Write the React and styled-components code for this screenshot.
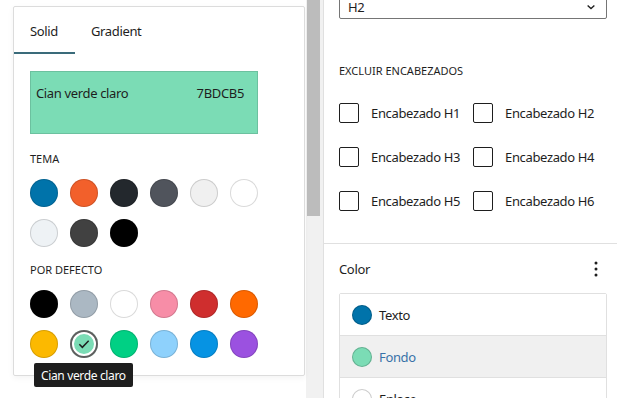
import React from "react";
import styled, { createGlobalStyle } from "styled-components";

const GlobalStyle = createGlobalStyle`
  body {
    margin: 0;
    font-family: "Noto Sans", "Open Sans", sans-serif;
    letter-spacing: -0.35px;
    color: #1e1e1e;
    background: #fff;
  }
`;

const themeColors = [
  "#0073aa",
  "#f2602b",
  "#23282d",
  "#50545c",
  "#f0f0f0",
  "#ffffff",
  "#eef2f5",
  "#414141",
  "#000000",
];

const defaultColors = [
  { hex: "#000000" },
  { hex: "#abb8c3" },
  { hex: "#ffffff" },
  { hex: "#f78da7" },
  { hex: "#cf2e2e" },
  { hex: "#ff6900" },
  { hex: "#fcb900" },
  { hex: "#7bdcb5", selected: true },
  { hex: "#00d084" },
  { hex: "#8ed1fc" },
  { hex: "#0693e3" },
  { hex: "#9b51e0" },
];

const headings = ["H1", "H2", "H3", "H4", "H5", "H6"];

const colorItems = [
  { label: "Texto", hex: "#0073aa" },
  { label: "Fondo", hex: "#7bdcb5", active: true },
  { label: "Enlace", hex: "#ffffff" },
];

const App = () => {
  return (
    <>
      <GlobalStyle />
      <Screen>
        <EditorArea>
          <Popover>
            <Tabs>
              <Tab active>Solid</Tab>
              <Tab>Gradient</Tab>
            </Tabs>
            <PopoverBody>
              <ColorDisplay>
                <span>Cian verde claro</span>
                <span>7BDCB5</span>
              </ColorDisplay>
              <GroupLabel>Tema</GroupLabel>
              <SwatchGrid>
                {themeColors.map((c, i) => (
                  <Swatch key={i} color={c} />
                ))}
              </SwatchGrid>
              <GroupLabel second>Por defecto</GroupLabel>
              <SwatchGrid>
                {defaultColors.map((c, i) => (
                  <Swatch key={i} color={c.hex} selected={c.selected}>
                    {c.selected && (
                      <svg width="16" height="16" viewBox="0 0 24 24">
                        <path
                          d="M5 12.5l4.5 4.5L19 7"
                          fill="none"
                          stroke="#1e1e1e"
                          strokeWidth="2.2"
                        />
                      </svg>
                    )}
                  </Swatch>
                ))}
              </SwatchGrid>
            </PopoverBody>
            <Tooltip>Cian verde claro</Tooltip>
          </Popover>
        </EditorArea>

        <Scrollbar>
          <Thumb />
        </Scrollbar>

        <Sidebar>
          <SettingsPanel>
            <Select>
              <span>H2</span>
              <svg width="18" height="18" viewBox="0 0 24 24">
                <path
                  d="M7.5 10l4.5 4 4.5-4"
                  fill="none"
                  stroke="#1e1e1e"
                  strokeWidth="1.8"
                />
              </svg>
            </Select>
            <SectionLabel>Excluir encabezados</SectionLabel>
            <CheckGrid>
              {headings.map((h) => (
                <CheckRow key={h}>
                  <CheckBox />
                  <span>Encabezado {h}</span>
                </CheckRow>
              ))}
            </CheckGrid>
          </SettingsPanel>

          <ColorPanel>
            <ColorHeader>
              <span>Color</span>
              <svg width="24" height="24" viewBox="0 0 24 24">
                <circle cx="12" cy="6" r="1.5" fill="#1e1e1e" />
                <circle cx="12" cy="12" r="1.5" fill="#1e1e1e" />
                <circle cx="12" cy="18" r="1.5" fill="#1e1e1e" />
              </svg>
            </ColorHeader>
            <ColorList>
              {colorItems.map((item) => (
                <ColorItem key={item.label} active={item.active}>
                  <Indicator color={item.hex} />
                  <span>{item.label}</span>
                </ColorItem>
              ))}
            </ColorList>
          </ColorPanel>
        </Sidebar>
      </Screen>
    </>
  );
};

const Screen = styled.div`
  display: flex;
  width: 617px;
  height: 398px;
  overflow: hidden;
  background: #fff;
`;

const EditorArea = styled.div`
  width: 306px;
  flex-shrink: 0;
  padding: 6px 0 0 13px;
  box-sizing: border-box;
`;

const Popover = styled.div`
  position: relative;
  width: 292px;
  height: 370px;
  box-sizing: border-box;
  border: 1px solid #dcdcdc;
  border-radius: 2px;
  background: #fff;
  box-shadow: 0 2px 6px rgba(0, 0, 0, 0.05);
`;

const Tabs = styled.div`
  display: flex;
  height: 47px;
`;

const Tab = styled.div`
  display: flex;
  align-items: center;
  padding: 0 17px 0 16px;
  font-size: 13px;
  color: #1e1e1e;
  box-shadow: ${(p) => (p.active ? "inset 0 -2px 0 #3a6b7a" : "none")};
`;

const PopoverBody = styled.div`
  padding: 17px 16px 16px;
`;

const ColorDisplay = styled.div`
  display: flex;
  justify-content: space-between;
  width: 228px;
  height: 63px;
  box-sizing: border-box;
  padding: 12px 13px 0 5px;
  background: #7bdcb5;
  border: 1px solid rgba(0, 0, 0, 0.12);
  font-size: 13px;
  line-height: 18px;
  color: #1e1e1e;
`;

const GroupLabel = styled.div`
  margin: ${(p) => (p.second ? "15px" : "17px")} 0 12px;
  font-size: 11px;
  line-height: 16px;
  letter-spacing: 0;
  text-transform: uppercase;
  color: #1e1e1e;
`;

const SwatchGrid = styled.div`
  display: grid;
  grid-template-columns: repeat(6, 28px);
  gap: 12px;
`;

const Swatch = styled.div`
  width: 28px;
  height: 28px;
  border-radius: 50%;
  background: ${(p) => p.color};
  display: flex;
  align-items: center;
  justify-content: center;
  box-shadow: ${(p) =>
    p.selected
      ? "inset 0 0 0 2px #5e5e5e, inset 0 0 0 4px #fff"
      : "inset 0 0 0 1px rgba(0, 0, 0, 0.15)"};
`;

const Tooltip = styled.div`
  position: absolute;
  left: 20px;
  top: 356px;
  height: 24px;
  padding: 0 7px;
  display: flex;
  align-items: center;
  background: #1e1e1e;
  color: #fff;
  font-size: 12px;
  white-space: nowrap;
  border-radius: 2px;
`;

const Scrollbar = styled.div`
  width: 17px;
  flex-shrink: 0;
  background: #f1f1f1;
`;

const Thumb = styled.div`
  height: 216px;
  margin: 0 3px 0 1px;
  background: #bcbcbc;
`;

const Sidebar = styled.div`
  flex: 1;
  border-left: 1px solid #e0e0e0;
  display: flex;
  flex-direction: column;
`;

const SettingsPanel = styled.div`
  padding: 0 10px 32px 15px;
  border-bottom: 1px solid #e0e0e0;
`;

const Select = styled.div`
  margin-top: -13px;
  height: 32px;
  box-sizing: border-box;
  padding: 8px 6px 0 8px;
  display: flex;
  align-items: center;
  justify-content: space-between;
  border: 1px solid #757575;
  border-radius: 2px;
  font-size: 13px;
`;

const SectionLabel = styled.div`
  margin: 44px 0 24px;
  font-size: 11px;
  line-height: 16px;
  letter-spacing: 0;
  text-transform: uppercase;
`;

const CheckGrid = styled.div`
  display: grid;
  grid-template-columns: 134px 1fr;
  row-gap: 24px;
`;

const CheckRow = styled.div`
  display: flex;
  align-items: center;
  gap: 12px;
  height: 20px;
  font-size: 13px;
  color: #1e1e1e;
`;

const CheckBox = styled.div`
  width: 20px;
  height: 20px;
  box-sizing: border-box;
  border: 1px solid #1e1e1e;
  border-radius: 2px;
`;

const ColorPanel = styled.div`
  padding: 0 10px 0 15px;
`;

const ColorHeader = styled.div`
  height: 49px;
  display: flex;
  align-items: center;
  justify-content: space-between;
  font-size: 13px;
  svg {
    margin-right: -1px;
  }
`;

const ColorList = styled.div`
  border: 1px solid #e0e0e0;
  border-radius: 2px;
`;

const ColorItem = styled.div`
  height: 41px;
  display: flex;
  align-items: center;
  gap: 7px;
  padding: 0 12px;
  font-size: 13px;
  color: ${(p) => (p.active ? "#3872a8" : "#1e1e1e")};
  background: ${(p) => (p.active ? "#f0f0f0" : "#fff")};
  & + & {
    border-top: 1px solid #e0e0e0;
  }
`;

const Indicator = styled.div`
  width: 20px;
  height: 20px;
  border-radius: 50%;
  background: ${(p) => p.color};
  box-shadow: inset 0 0 0 1px rgba(0, 0, 0, 0.2);
`;

export default App;
